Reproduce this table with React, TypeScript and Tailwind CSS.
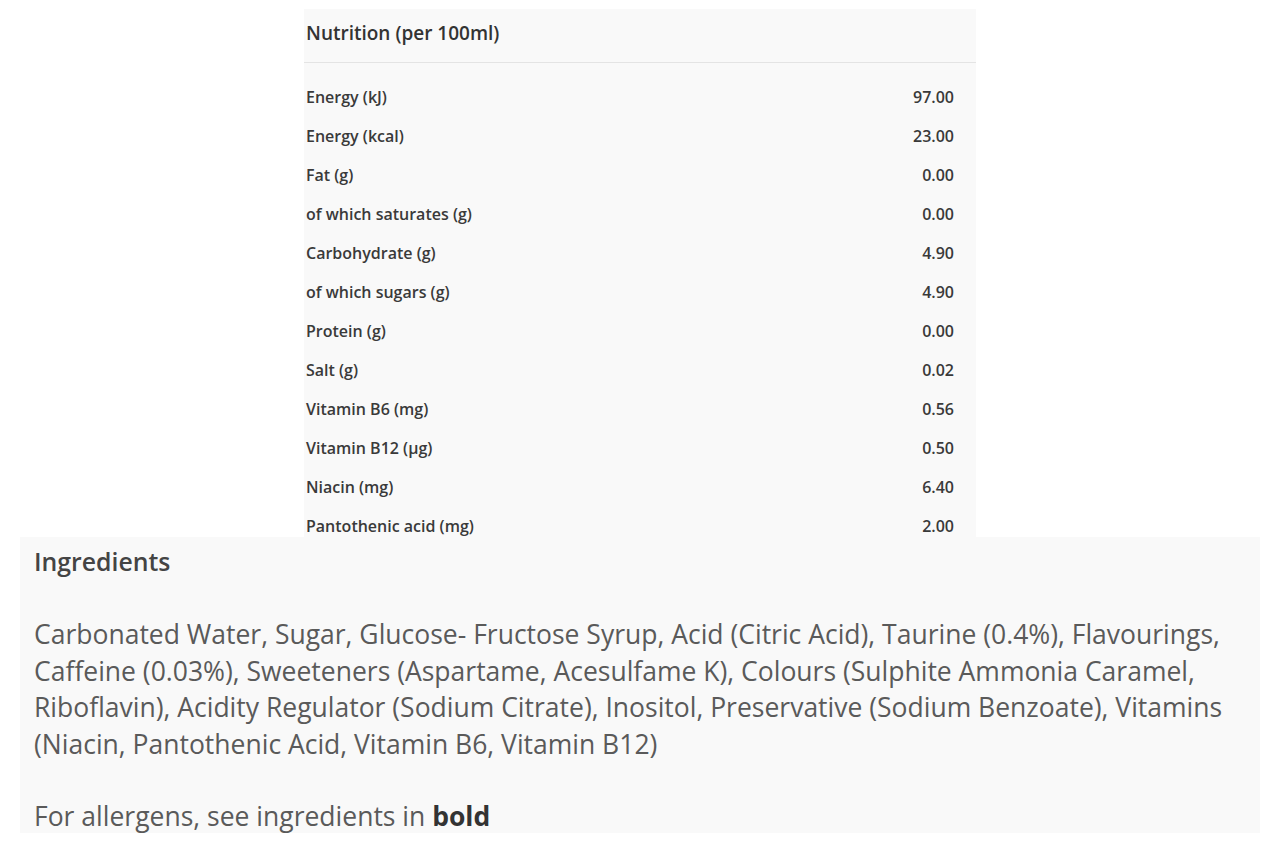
const rows: [string, string][] = [
  ["Energy (kJ)", "97.00"],
  ["Energy (kcal)", "23.00"],
  ["Fat (g)", "0.00"],
  ["of which saturates (g)", "0.00"],
  ["Carbohydrate (g)", "4.90"],
  ["of which sugars (g)", "4.90"],
  ["Protein (g)", "0.00"],
  ["Salt (g)", "0.02"],
  ["Vitamin B6 (mg)", "0.56"],
  ["Vitamin B12 (µg)", "0.50"],
  ["Niacin (mg)", "6.40"],
  ["Pantothenic acid (mg)", "2.00"],
];

export default function App() {
  return (
    <div className="w-[1280px] h-[853px] bg-white flex flex-col font-['Open_Sans',sans-serif] overflow-hidden">
      {/* Nutrition table */}
      <div className="ml-[304px] mt-[9px] w-[672px] bg-[#f9f9f9]">
        <div className="h-[54px] flex items-center pl-[2px] pb-[4px] border-b border-[#e4e4e4] text-[19px] font-semibold text-[#333]">
          Nutrition (per 100ml)
        </div>
        <div className="h-[474px] overflow-hidden pt-[14px]">
          {rows.map(([label, value]) => (
            <div
              key={label}
              className="h-[39px] flex items-center justify-between pl-[2px] pr-[22px] text-[16px] font-semibold text-[#3a3a3a]"
            >
              <span>{label}</span>
              <span>{value}</span>
            </div>
          ))}
        </div>
      </div>

      {/* Ingredients */}
      <div className="ml-[20px] w-[1240px] h-[296px] bg-[#f9f9f9] pl-[14px] pr-[10px] pt-[8px] text-[#5a5a5a]">
        <h3 className="text-[24.8px] font-semibold leading-[32px] text-[#444]">Ingredients</h3>
        <p className="mt-[39px] text-[26.5px] leading-[36.7px] whitespace-nowrap">
          Carbonated Water, Sugar, Glucose- Fructose Syrup, Acid (Citric Acid), Taurine (0.4%), Flavourings,
          <br />
          Caffeine (0.03%), Sweeteners (Aspartame, Acesulfame K), Colours (Sulphite Ammonia Caramel,
          <br />
          Riboflavin), Acidity Regulator (Sodium Citrate), Inositol, Preservative (Sodium Benzoate), Vitamins
          <br />
          (Niacin, Pantothenic Acid, Vitamin B6, Vitamin B12)
        </p>
        <p className="mt-[35px] text-[26.5px] leading-[36.7px]">
          For allergens, see ingredients in <b className="font-bold text-[#333]">bold</b>
        </p>
      </div>
    </div>
  );
}
